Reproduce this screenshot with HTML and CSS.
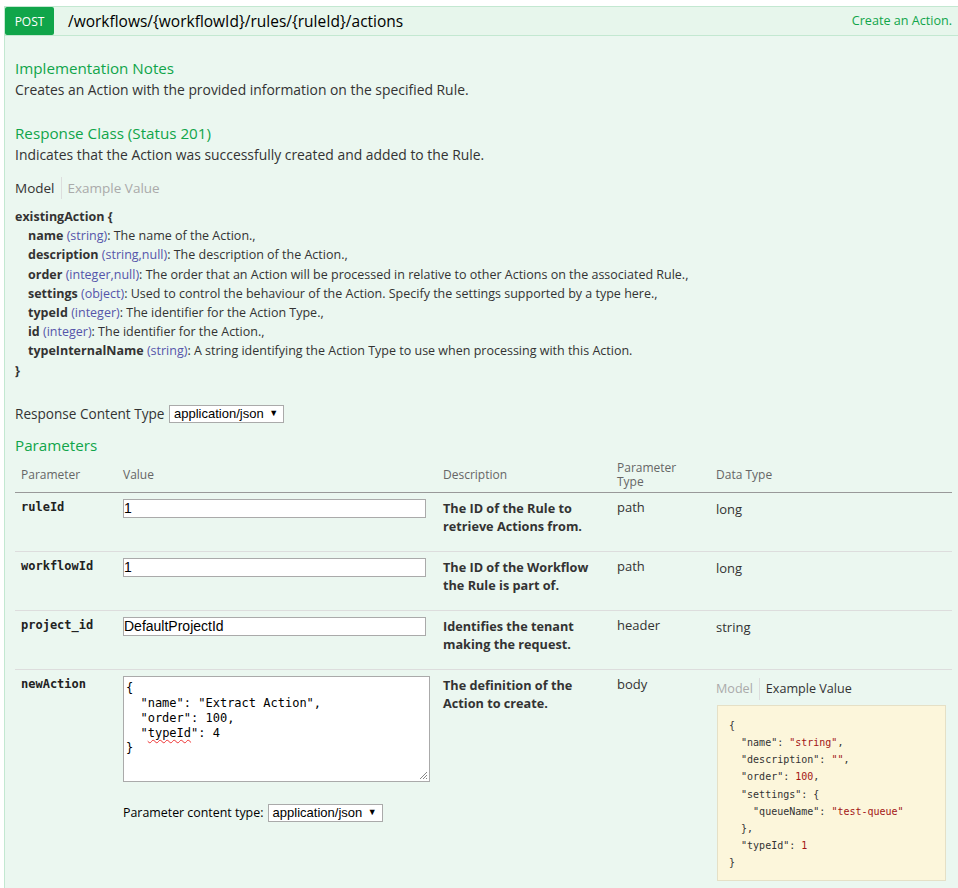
FILE: index.html
```html
<!DOCTYPE html>
<html>
<head>
<meta charset="utf-8">
<title>POST /workflows/{workflowId}/rules/{ruleId}/actions</title>
<link rel="stylesheet" href="styles.css">
</head>
<body>
<div class="op">
  <div class="heading">
    <span class="method">POST</span>
    <span class="path">/workflows/{workflowId}/rules/{ruleId}/actions</span>
    <span class="summary">Create an Action.</span>
  </div>
  <div class="content">
    <h4>Implementation Notes</h4>
    <p class="text">Creates an Action with the provided information on the specified Rule.</p>
    <h4 class="gap">Response Class (Status 201)</h4>
    <p class="text">Indicates that the Action was successfully created and added to the Rule.</p>
    <div class="tabs tabs-top">
      <span class="tab active">Model</span><span class="tab">Example Value</span>
    </div>
    <div class="model">
      <div class="strong">existingAction {</div>
      <div class="prop"><b>name</b> <span class="ptype">(string)</span>: The name of the Action.,</div>
      <div class="prop"><b>description</b> <span class="ptype">(string,null)</span>: The description of the Action.,</div>
      <div class="prop"><b>order</b> <span class="ptype">(integer,null)</span>: The order that an Action will be processed in relative to other Actions on the associated Rule.,</div>
      <div class="prop"><b>settings</b> <span class="ptype">(object)</span>: Used to control the behaviour of the Action. Specify the settings supported by a type here.,</div>
      <div class="prop"><b>typeId</b> <span class="ptype">(integer)</span>: The identifier for the Action Type.,</div>
      <div class="prop"><b>id</b> <span class="ptype">(integer)</span>: The identifier for the Action.,</div>
      <div class="prop"><b>typeInternalName</b> <span class="ptype">(string)</span>: A string identifying the Action Type to use when processing with this Action.</div>
      <div class="strong">}</div>
    </div>
    <div class="rct">Response Content Type <span class="select">application/json <span class="arrow">▼</span></span></div>
    <h4 class="params-title">Parameters</h4>
    <table class="params">
      <colgroup>
        <col class="c1"><col class="c2"><col class="c3"><col class="c4"><col class="c5">
      </colgroup>
      <thead>
        <tr>
          <th>Parameter</th>
          <th>Value</th>
          <th>Description</th>
          <th>Parameter<br>Type</th>
          <th>Data Type</th>
        </tr>
      </thead>
      <tbody>
        <tr>
          <td class="code">ruleId</td>
          <td><div class="input">1</div></td>
          <td class="desc">The ID of the Rule to retrieve Actions from.</td>
          <td>path</td>
          <td class="dtype">long</td>
        </tr>
        <tr>
          <td class="code">workflowId</td>
          <td><div class="input">1</div></td>
          <td class="desc">The ID of the Workflow the Rule is part of.</td>
          <td>path</td>
          <td class="dtype">long</td>
        </tr>
        <tr>
          <td class="code">project_id</td>
          <td><div class="input">DefaultProjectId</div></td>
          <td class="desc">Identifies the tenant making the request.</td>
          <td>header</td>
          <td class="dtype">string</td>
        </tr>
        <tr class="last">
          <td class="code">newAction</td>
          <td>
            <div class="textarea">{
  "name": "Extract Action",
  "order": 100,
  "<span class="spell">typeId</span>": 4
}<svg class="grip" width="11" height="11" viewBox="0 0 11 11"><path d="M10 3 L3 10 M10 6 L6 10 M10 9 L9 10" stroke="#888" stroke-width="1"/></svg></div>
            <div class="pct">Parameter content type: <span class="select small">application/json <span class="arrow">▼</span></span></div>
          </td>
          <td class="desc">The definition of the Action to create.</td>
          <td>body</td>
          <td>
            <div class="tabs tabs-right">
              <span class="tab">Model</span><span class="tab active">Example Value</span>
            </div>
            <pre class="example">{
  <span class="k">"name"</span>: <span class="s">"string"</span>,
  <span class="k">"description"</span>: <span class="s">""</span>,
  <span class="k">"order"</span>: <span class="s">100</span>,
  <span class="k">"settings"</span>: {
    <span class="k">"queueName"</span>: <span class="s">"test-queue"</span>
  },
  <span class="k">"typeId"</span>: <span class="s">1</span>
}</pre>
          </td>
        </tr>
      </tbody>
    </table>
  </div>
</div>
</body>
</html>
```
FILE: styles.css
```css
* { box-sizing: border-box; }

html, body { background: #fff; }

body {
  margin: 0;
  padding: 6px 0 0 4px;
  font-family: "Open Sans", "Noto Sans", sans-serif;
  font-size: 13px;
  color: #333;
}

.heading {
  display: flex;
  align-items: stretch;
  height: 30px;
  background: #e7f6ec;
  border: 1px solid #c3e8d1;
  border-right: none;
}

.method {
  width: 49px;
  background: #10a54a;
  color: #fff;
  border-radius: 2px;
  font-size: 12px;
  display: flex;
  align-items: center;
  justify-content: center;
  padding-top: 1px;
}

.path {
  margin-left: 14px;
  font-size: 15.5px;
  color: #000;
  display: flex;
  align-items: center;
  padding-bottom: 1px;
}

.summary {
  margin-left: auto;
  padding-right: 6px;
  color: #10a54a;
  font-size: 12.6px;
  display: flex;
  align-items: center;
  padding-bottom: 1px;
}

.content {
  background: #ebf7f0;
  border-left: 1px solid #c3e8d1;
  padding: 21px 6px 30px 10px;
}

h4 {
  margin: 0;
  font-size: 15.2px;
  font-weight: normal;
  line-height: 22px;
  color: #10a54a;
}

h4.gap { margin-top: 23px; }

.text {
  margin: 1px 0 0;
  font-size: 13.9px;
  line-height: 19px;
}

.tabs {
  display: flex;
  line-height: 22px;
}

.tabs-top {
  margin-top: 13px;
  font-size: 13.5px;
}

.tab {
  color: #aaa;
  padding: 0 6px;
}

.tab:first-child {
  padding-left: 0;
  border-right: 1px solid #ddd;
}

.tab.active { color: #333; }

.model {
  margin-top: 8px;
  font-size: 12.5px;
  line-height: 19.2px;
}

.model .strong { font-weight: bold; }

.prop { padding-left: 13px; }

.prop b { font-weight: bold; }

.ptype { color: #55a; }

.rct {
  margin-top: 24px;
  line-height: 19px;
  font-size: 13.6px;
}

.select {
  display: inline-block;
  vertical-align: middle;
  height: 18px;
  line-height: 16px;
  padding: 0 5px 0 4px;
  background: #fff;
  border: 1px solid #aaa;
  font-family: "Liberation Sans", Arial, sans-serif;
  font-size: 13px;
  color: #000;
  margin-top: -2px;
  margin-left: 1px;
}

.arrow {
  font-size: 9px;
  margin-left: 2px;
  position: relative;
  top: -2px;
}

.params-title { margin-top: 11px; }

.params {
  width: 100%;
  border-collapse: collapse;
  table-layout: fixed;
}

.c1 { width: 102px; }
.c2 { width: 320px; }
.c3 { width: 174px; }
.c4 { width: 99px; }
.c5 { width: auto; }

.params th {
  text-align: left;
  font-weight: normal;
  color: #666;
  font-size: 12px;
  line-height: 14px;
  padding: 5px 6px 3px;
  vertical-align: middle;
  border-bottom: 1px solid #999;
}

.params td {
  vertical-align: top;
  padding: 5px 6px 17px;
  line-height: 19px;
  border-bottom: 1px solid #ddd;
  color: #333;
}

.params tr.last td { border-bottom: none; }

.params td.code {
  font-family: "DejaVu Sans Mono", monospace;
  font-size: 12px;
  font-weight: bold;
  color: #222;
}

.params td.desc {
  font-weight: bold;
  font-size: 12.7px;
  line-height: 18px;
  padding-top: 6px;
  padding-bottom: 16px;
}

.params td.dtype { padding-top: 7px; }

.input {
  margin-top: 1px;
  width: 303px;
  height: 19px;
  border: 1px solid #aaa;
  background: #fff;
  font-family: "Liberation Sans", Arial, sans-serif;
  font-size: 14px;
  line-height: 17px;
  color: #000;
  padding-left: 0;
}

.textarea {
  position: relative;
  margin-top: 1px;
  width: 307px;
  height: 106px;
  border: 1px solid #aaa;
  background: #fff;
  font-family: "DejaVu Sans Mono", monospace;
  font-size: 12px;
  line-height: 15px;
  color: #000;
  padding: 4px 2px 3px;
  white-space: pre;
}

.spell {
  text-decoration: underline wavy #e33;
  text-decoration-thickness: 1px;
  text-underline-offset: 2px;
}

.grip {
  position: absolute;
  right: 1px;
  bottom: 1px;
}

.pct {
  margin-top: 21px;
  line-height: 19px;
  font-size: 12.4px;
  color: #000;
}

.tabs-right {
  margin-top: 3px;
  font-size: 12.6px;
}

.example {
  margin: 5px 0 0 1px;
  width: 229px;
  height: 176px;
  background: #fcf6db;
  border: 1px solid #e5e0c6;
  padding: 10.5px 10px 8px 11px;
  font-family: "DejaVu Sans Mono", monospace;
  font-size: 10px;
  line-height: 17.2px;
  color: #333;
}

.example .k { color: #333; }
.example .s { color: #a31515; }
```
